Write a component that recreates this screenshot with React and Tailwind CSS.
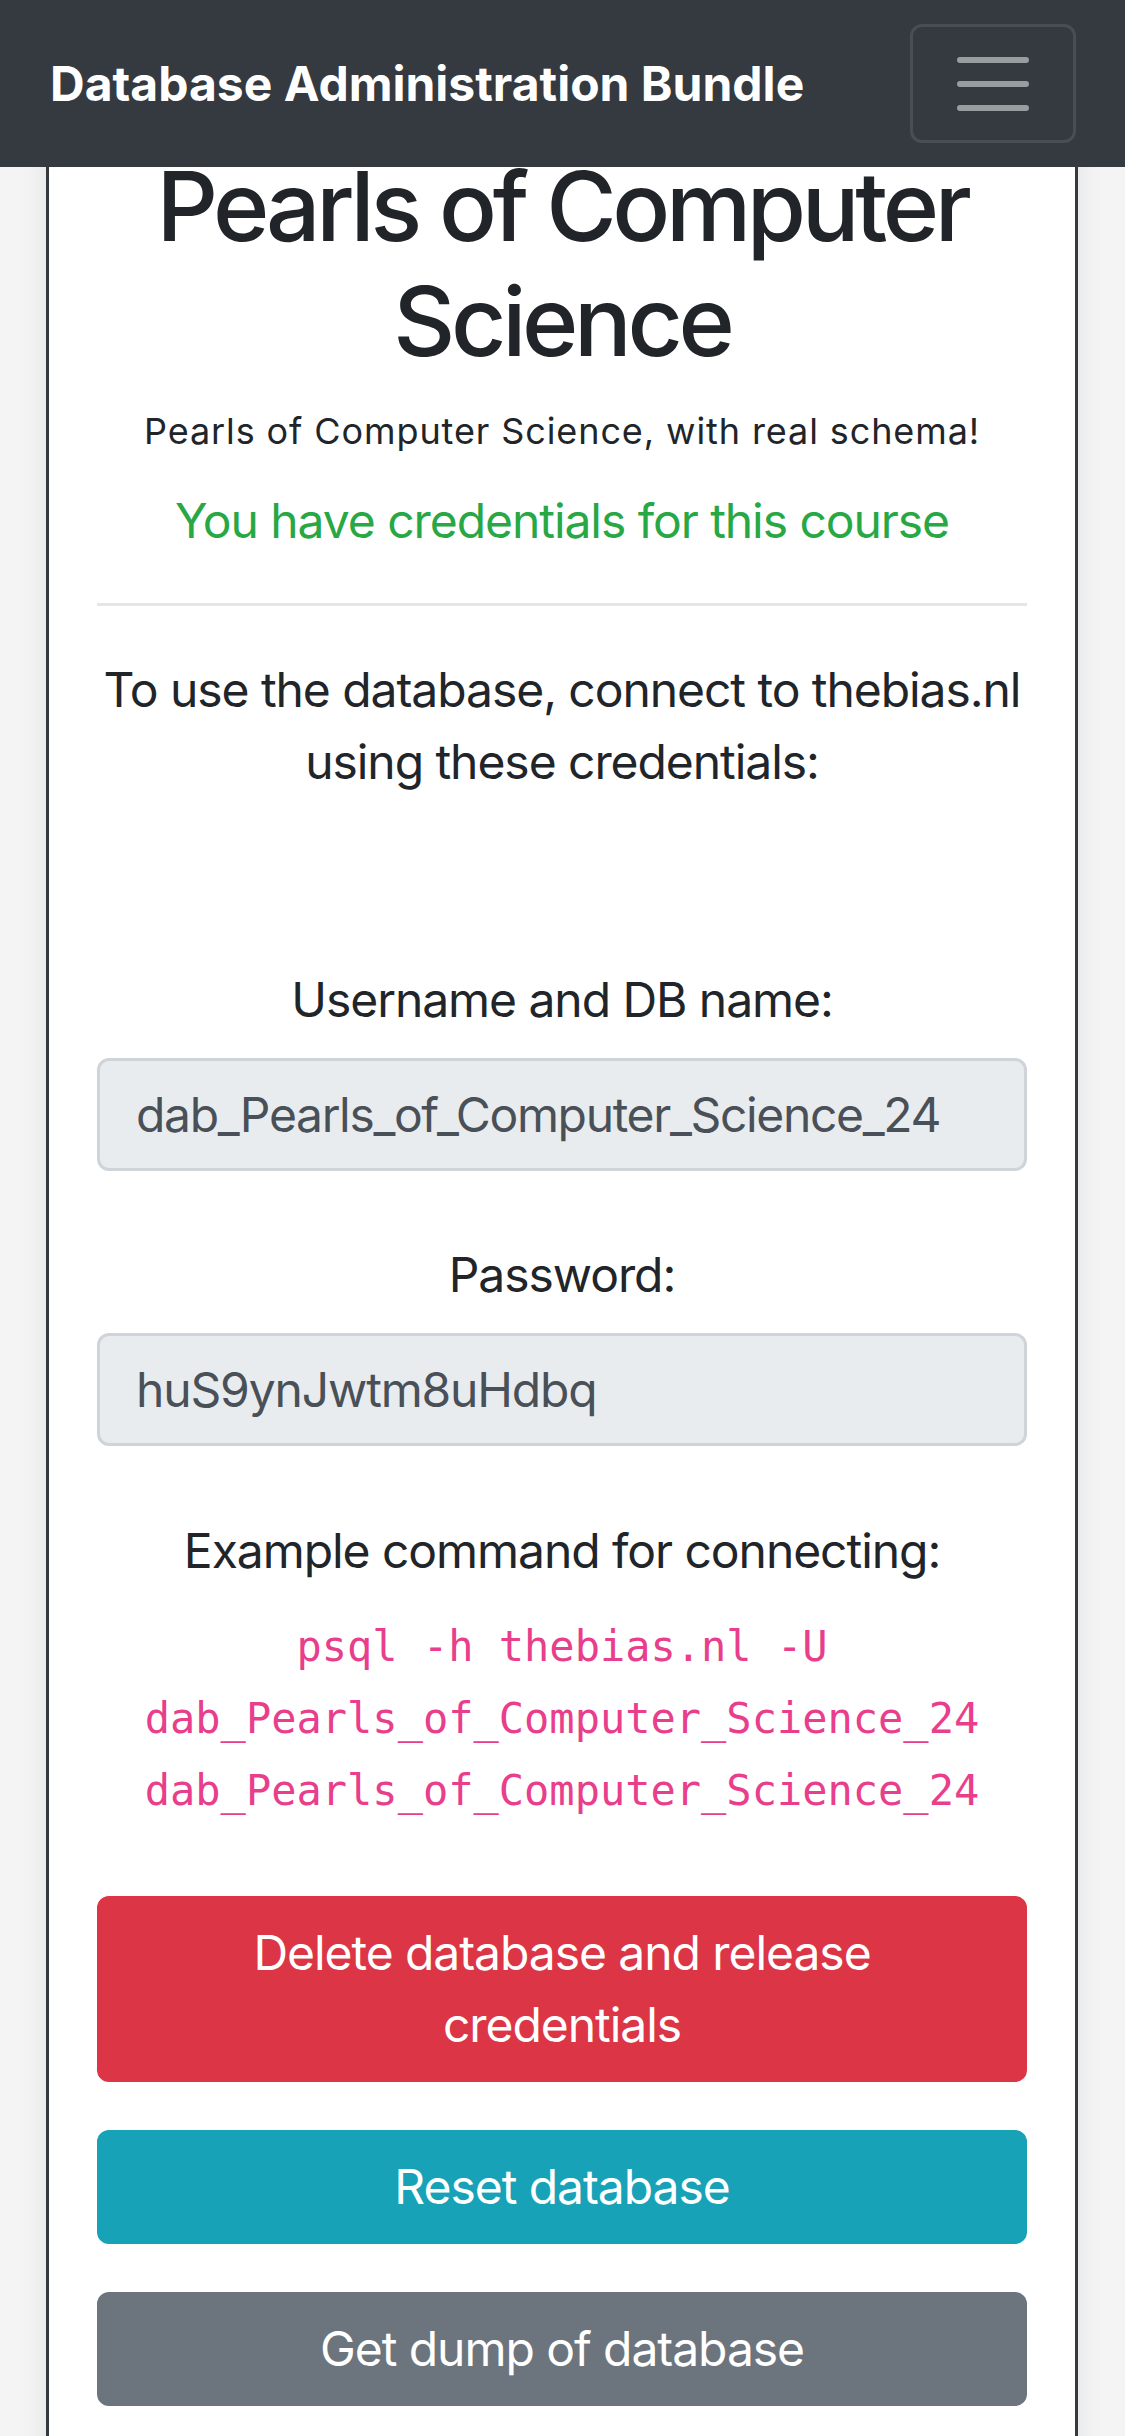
export default function App() {
  return (
    <div className="min-h-[2436px] bg-[#f4f4f4] font-['Inter','Noto_Sans',sans-serif] text-[48px] leading-[72px] tracking-[-0.022em] text-[#212529]">
      <nav className="fixed inset-x-0 top-0 z-10 flex h-[167px] items-center justify-between bg-[#343a40] pl-[50px] pr-[49px]">
        <span className="text-[48px] font-bold leading-[60px] tracking-normal text-white">Database Administration Bundle</span>
        <button className="flex h-[119px] w-[166px] items-center justify-center rounded-[12px] border-[3px] border-[#484e53]">
          <svg width="90" height="90" viewBox="0 0 30 30" fill="none">
            <path d="M4 7h22M4 15h22M4 23h22" stroke="#9a9da0" strokeWidth="2" strokeLinecap="round" strokeMiterlimit="10" />
          </svg>
        </button>
      </nav>
      <main className="pl-[46px] pr-[47px]">
        <div className="border-x-[3px] border-[#343a40] bg-white px-[48px] pb-[120px] pt-[149px] text-center shadow-[0_0_24px_rgba(0,0,0,0.08)]">
          <h2 className="text-[96px] font-medium leading-[115px] tracking-[-0.045em]">Pearls of Computer Science</h2>
          <p className="mt-[25px] text-[36px] leading-[54px] tracking-[0.025em]">Pearls of Computer Science, with real schema!</p>
          <p className="mt-[27px] text-[#28a745]">You have credentials for this course</p>
          <hr className="mb-[48px] mt-[46px] border-t-[3px] border-[#e6e6e6]" />
          <p>
            To use the database, connect to thebias.nl
            <br />
            using these credentials:
          </p>
          <div className="mt-[166px]">Username and DB name:</div>
          <input
            readOnly
            value="dab_Pearls_of_Computer_Science_24"
            className="mt-[22px] block h-[113px] w-full rounded-[12px] border-[3px] border-[#ced4da] bg-[#e9ecef] px-[36px] text-left text-[48px] leading-[72px] tracking-[-0.028em] text-[#495057] outline-none"
          />
          <div className="mt-[68px]">Password:</div>
          <input
            readOnly
            value="huS9ynJwtm8uHdbq"
            className="mt-[22px] block h-[113px] w-full rounded-[12px] border-[3px] border-[#ced4da] bg-[#e9ecef] px-[36px] text-left text-[48px] leading-[72px] tracking-[-0.024em] text-[#495057] outline-none"
          />
          <div className="mt-[69px]">Example command for connecting:</div>
          <p className="mt-[21px]">
            <code className="break-words font-['DejaVu_Sans_Mono',monospace] text-[42px] leading-none tracking-normal text-[#e83e8c]">
              psql -h thebias.nl -U dab_Pearls_of_Computer_Science_24 dab_Pearls_of_Computer_Science_24
            </code>
          </p>
          <div className="mt-[72px] flex flex-col gap-[48px]">
            <button className="w-full rounded-[12px] border-[3px] border-[#dc3545] bg-[#dc3545] px-[36px] py-[18px] text-[48px] leading-[72px] text-white">
              Delete database and release credentials
            </button>
            <button className="w-full rounded-[12px] border-[3px] border-[#17a2b8] bg-[#17a2b8] px-[36px] py-[18px] text-[48px] leading-[72px] text-white">
              Reset database
            </button>
            <button className="w-full rounded-[12px] border-[3px] border-[#6c757d] bg-[#6c757d] px-[36px] py-[18px] text-[48px] leading-[72px] text-white">
              Get dump of database
            </button>
          </div>
        </div>
      </main>
    </div>
  );
}
